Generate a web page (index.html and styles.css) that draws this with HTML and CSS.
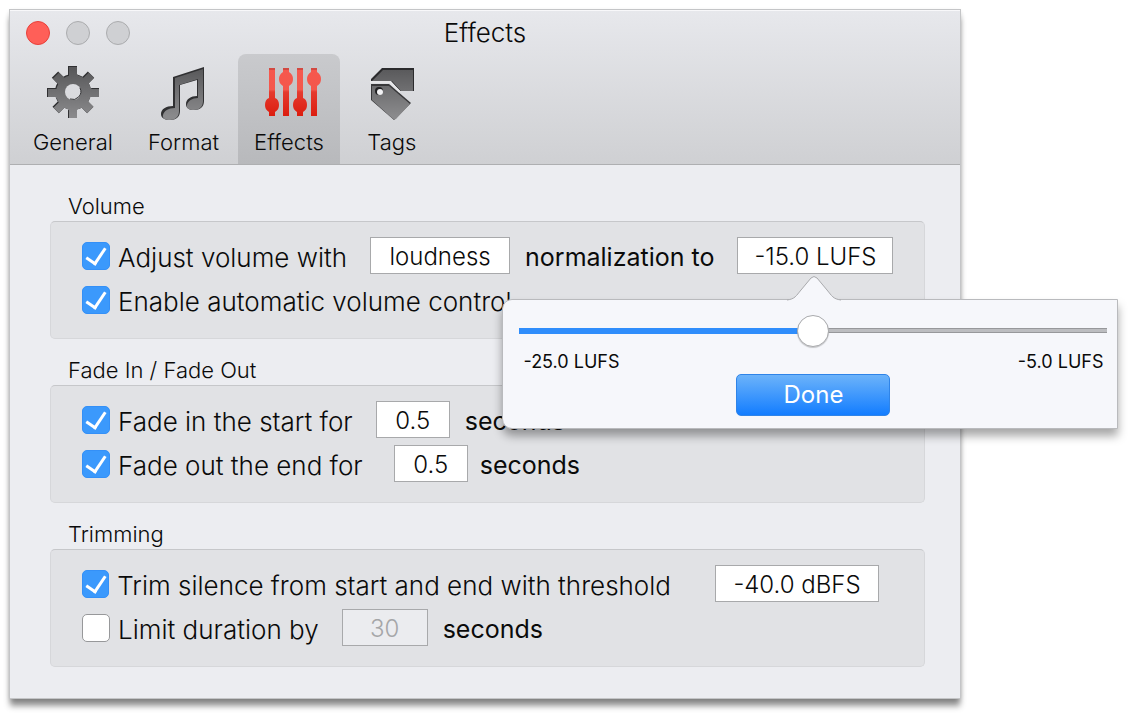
FILE: index.html
```html
<!DOCTYPE html>
<html lang="en">
<head>
    <meta charset="UTF-8">
    <meta name="viewport" content="width=device-width, initial-scale=1.0">
    <title>Effects</title>
    <link rel="stylesheet" href="styles.css">
</head>
<body>
    <main class="window">
        <header class="toolbar">
            <div class="title-bar">
                <div class="lights">
                    <button class="light close" aria-label="Close"></button>
                    <button class="light" aria-label="Minimize" disabled></button>
                    <button class="light" aria-label="Zoom" disabled></button>
                </div>
                <h1>Effects</h1>
            </div>
            <nav class="tabs">
                <button class="tab">
                    <svg class="icon" viewBox="0 0 56 56" aria-hidden="true">
                        <defs>
                            <linearGradient id="metal" gradientUnits="userSpaceOnUse" x1="0" y1="4" x2="0" y2="52">
                                <stop offset="0" stop-color="#58585a"/>
                                <stop offset="1" stop-color="#8a8a8c"/>
                            </linearGradient>
                            <linearGradient id="red" gradientUnits="userSpaceOnUse" x1="0" y1="4" x2="0" y2="52">
                                <stop offset="0" stop-color="#f6584e"/>
                                <stop offset="0.45" stop-color="#f4574c"/>
                                <stop offset="0.5" stop-color="#e53a2e"/>
                                <stop offset="1" stop-color="#dc1d0f"/>
                            </linearGradient>
                            <mask id="gearHole">
                                <rect width="56" height="56" fill="#fff"/>
                                <circle cx="28" cy="28" r="8" fill="#000"/>
                            </mask>
                            <clipPath id="gearClip">
                                <circle cx="28" cy="28" r="18"/>
                                <path d="M23 2h9v52h-9zM2 24h52v9H2z"/>
                                <path d="M24 3h9v50h-9zM3 24h50v9H3z" transform="rotate(45 28 28)"/>
                            </clipPath>
                        </defs>
                        <g mask="url(#gearHole)">
                            <g clip-path="url(#gearClip)">
                                <rect width="56" height="56" fill="#303032"/>
                                <g transform="translate(1 1)">
                                    <rect width="56" height="56" fill="url(#metal)" clip-path="url(#gearClip)"/>
                                </g>
                            </g>
                        </g>
                        <path d="M35 24a8 8 0 0 1-10 11" fill="none" stroke="#333335" stroke-width="1"/>
                    </svg>
                    <span>General</span>
                </button>
                <button class="tab">
                    <svg class="icon" viewBox="0 0 56 56" aria-hidden="true">
                        <path fill="#303032" d="M18 13L49 3v34c0 6-4 9-10 9-5 0-8-2-8-6 0-5 5-8 11-8V16l-17 5v26c0 6-4 9-10 9-5 0-9-2-9-6 0-5 5-8 12-8z"/>
                        <path fill="url(#metal)" d="M20 14L48 5v32c0 6-4 9-9 9s-8-2-7-5c1-4 5-7 11-7V15l-19 6v26c0 6-4 9-9 9s-8-2-7-5c1-4 5-7 12-7z"/>
                    </svg>
                    <span>Format</span>
                </button>
                <button class="tab selected" aria-current="page">
                    <svg class="icon" viewBox="0 0 56 56" aria-hidden="true">
                        <g fill="url(#red)">
                            <path d="M8 4h6v30c3 1 4 4 4 7s-1 5-4 7v4H8v-4c-3-2-4-4-4-7s1-6 4-7z"/>
                            <path d="M22 4h6v4c3 2 4 4 4 7s-1 5-4 7v30h-6V22c-3-2-4-4-4-7s1-5 4-7z"/>
                            <path d="M36 4h6v30c3 1 4 4 4 7s-1 5-4 7v4h-6v-4c-3-2-4-4-4-7s1-6 4-7z"/>
                            <path d="M50 4h6v4c3 2 4 4 4 7s-1 5-4 7v30h-6V22c-3-2-4-4-4-7s1-5 4-7z"/>
                        </g>
                        <path d="M8 5h6M22 5h6M36 5h6M50 5h6" stroke="#b03a34" stroke-width="1"/>
                    </svg>
                    <span>Effects</span>
                </button>
                <button class="tab">
                    <svg class="icon" viewBox="0 0 56 56" aria-hidden="true">
                        <path fill="#2b2b2d" d="M18 4h32v23H36l-9-10H7v-2z"/>
                        <path fill="url(#metal)" d="M19 6h30v21H37l-9-10H8z"/>
                        <path fill="#38383a" d="M7 20h18l22 19-17 17-23-20z"/>
                        <path fill="url(#metal)" d="M8 22h17l21 18-14 15q-2 1-4-1L8 36z"/>
                        <circle cx="15" cy="27" r="4" fill="#202022"/>
                        <circle cx="16" cy="28" r="3" fill="#f2f2f4"/>
                        <path d="M6 18h20l10 10" fill="none" stroke="#e6e6e8" stroke-width="2"/>
                    </svg>
                    <span>Tags</span>
                </button>
            </nav>
        </header>

        <form class="content">
            <section class="group">
                <h2>Volume</h2>
                <div class="box">
                    <div class="row">
                        <input type="checkbox" id="adjust" checked>
                        <label for="adjust">Adjust volume with</label>
                        <select class="field method" aria-label="Normalization method">
                            <option>loudness</option>
                        </select>
                        <label class="unit" for="target">normalization to</label>
                        <div class="anchor">
                            <input type="text" class="field target" id="target" value="-15.0 LUFS">
                            <div class="popover">
                                <svg class="arrow" viewBox="0 0 54 26" aria-hidden="true">
                                    <path d="M0 25C8 24 9 21 14 15L24 3q3-3 6 0l10 12c5 6 6 9 14 10v1H0z" fill="#f6f7fb"/>
                                    <path d="M0 25C8 24 9 21 14 15L24 3q3-3 6 0l10 12c5 6 6 9 14 10" fill="none" stroke="#a9aaad" stroke-width="1"/>
                                </svg>
                                <input type="range" class="slider" min="-25" max="-5" value="-15" aria-label="Target loudness">
                                <div class="limits">
                                    <span>-25.0 LUFS</span>
                                    <span>-5.0 LUFS</span>
                                </div>
                                <button type="button" class="done">Done</button>
                            </div>
                        </div>
                    </div>
                    <div class="row">
                        <input type="checkbox" id="auto" checked>
                        <label for="auto">Enable automatic volume control</label>
                    </div>
                </div>
            </section>

            <section class="group">
                <h2>Fade In / Fade Out</h2>
                <div class="box">
                    <div class="row">
                        <input type="checkbox" id="fadeIn" checked>
                        <label for="fadeIn">Fade in the start for</label>
                        <input type="text" class="field short" id="fadeInTime" value="0.5">
                        <label class="unit" for="fadeInTime">seconds</label>
                    </div>
                    <div class="row">
                        <input type="checkbox" id="fadeOut" checked>
                        <label for="fadeOut">Fade out the end for</label>
                        <input type="text" class="field short wide-gap" id="fadeOutTime" value="0.5">
                        <label class="unit" for="fadeOutTime">seconds</label>
                    </div>
                </div>
            </section>

            <section class="group">
                <h2>Trimming</h2>
                <div class="box">
                    <div class="row">
                        <input type="checkbox" id="trim" checked>
                        <label for="trim">Trim silence from start and end with threshold</label>
                        <input type="text" class="field threshold" aria-label="Silence threshold" value="-40.0 dBFS">
                    </div>
                    <div class="row">
                        <input type="checkbox" id="limit">
                        <label for="limit">Limit duration by</label>
                        <input type="text" class="field duration" id="limitTime" value="30" disabled>
                        <label class="unit" for="limitTime">seconds</label>
                    </div>
                </div>
            </section>
        </form>
    </main>
</body>
</html>
```
FILE: styles.css
```css
:root {
    --text: #0a0a0a;
    --blue: #3b99fc;
    --border: #a8a9ab;
}

* {
    box-sizing: border-box;
}

body {
    margin: 0;
    padding: 10px 168px 20px 10px;
    background: #fff;
    color: var(--text);
    font-family: Inter, "Liberation Sans", sans-serif;
    font-size: 26px;
    font-weight: 300;
}

button,
input,
select {
    font: inherit;
    color: inherit;
    margin: 0;
}

.window {
    background: #ecedf1;
    box-shadow: 0 0 0 1px #c4c5c7, 0 8px 6px rgba(0, 0, 0, 0.42), 0 2px 5px rgba(0, 0, 0, 0.2);
}

.toolbar {
    background: linear-gradient(#e7e8ec, #cfd0d3);
    border-bottom: 1px solid #aeafb1;
    border-top: 1px solid #f8f8fa;
}

.title-bar {
    display: grid;
    grid-template-columns: 1fr auto 1fr;
    align-items: center;
    height: 43px;
    padding: 0 16px;
}

.title-bar h1 {
    margin: 0;
    font-size: 26px;
    font-weight: 300;
}

.lights {
    display: flex;
    gap: 16px;
}

.light {
    width: 24px;
    height: 24px;
    padding: 0;
    border: 1px solid #abacae;
    border-radius: 50%;
    background: #cfd0d3;
}

.light.close {
    border-color: #e8403a;
    background: #ff5f58;
}

.tabs {
    display: flex;
    gap: 3px;
    padding-left: 7px;
}

.tab {
    display: flex;
    flex-direction: column;
    align-items: center;
    gap: 7px;
    min-width: 98px;
    height: 110px;
    padding: 10px 16px 0;
    border: 0;
    border-radius: 8px 8px 0 0;
    background: none;
    font-size: 22px;
    line-height: 30px;
}

.tab.selected {
    background: linear-gradient(#c9cacd, #b8b9bc);
}

.icon {
    width: 56px;
    height: 56px;
    overflow: visible;
}

.content {
    padding: 10px 35px 31px 40px;
}

.group h2 {
    margin: 0;
    padding: 16px 18px 0;
    font-size: 22px;
    font-weight: 300;
    line-height: 30px;
}

.box {
    padding: 13px 30px 15px 31px;
    border: 1px solid #d6d7da;
    border-top-color: #c6c7ca;
    border-radius: 5px;
    background: #e1e2e5;
}

.row {
    display: flex;
    align-items: center;
    height: 44px;
    white-space: nowrap;
}

.unit {
    font-size: 25px;
    font-weight: 400;
}

input[type="checkbox"] {
    appearance: none;
    display: grid;
    place-items: center;
    width: 28px;
    height: 28px;
    margin: 0 8px 2px 0;
    border: 1px solid #97989a;
    border-radius: 5px;
    background: #fff;
}

input[type="checkbox"]:checked {
    border-color: #3490f7;
    background: var(--blue);
}

input[type="checkbox"]:checked::after {
    content: "";
    width: 9px;
    height: 17px;
    margin-bottom: 4px;
    border: solid #fff;
    border-width: 0 3px 3px 0;
    transform: rotate(34deg);
}

.field {
    appearance: none;
    height: 37px;
    margin: 0 15px 4px 23px;
    padding: 3px 0 0;
    border: 1px solid var(--border);
    border-radius: 0;
    background: #fff;
    font-size: 24px;
    text-align: center;
    text-align-last: center;
}

.field:disabled {
    background: #ebecef;
    color: #a5a6a8;
}

.field.wide-gap {
    margin-left: 31px;
    margin-right: 12px;
}

.method {
    width: 140px;
}

.target {
    width: 156px;
    margin-right: 0;
}

.short {
    width: 74px;
}

.threshold {
    width: 164px;
    margin-left: 44px;
}

.duration {
    width: 86px;
}

.anchor {
    position: relative;
    display: flex;
}

.popover {
    position: absolute;
    z-index: 1;
    top: 62px;
    left: -212px;
    display: flex;
    flex-direction: column;
    align-items: center;
    width: 616px;
    height: 130px;
    padding: 15px 10px 13px 16px;
    border: 1px solid #b9babd;
    border-radius: 10px 0 0 10px;
    background: #f6f7fb;
    box-shadow: 0 7px 10px rgba(0, 0, 0, 0.35);
}

.arrow {
    position: absolute;
    top: -25px;
    left: 284px;
    width: 54px;
    height: 26px;
}

.slider {
    appearance: none;
    width: 100%;
    height: 32px;
    background:
        linear-gradient(90deg, #2f8dfb 50%, transparent 50%) center / 100% 6px no-repeat,
        linear-gradient(#97989b 1px, #bcbdc0 1px, #bcbdc0 4px, #97989b 4px) center / 100% 5px no-repeat;
}

.slider::-webkit-slider-thumb {
    appearance: none;
    width: 32px;
    height: 32px;
    border: 1px solid #a9aaad;
    border-radius: 50%;
    background: #fff;
    box-shadow: 0 1px 1px rgba(0, 0, 0, 0.2);
}

.limits {
    display: flex;
    justify-content: space-between;
    align-self: stretch;
    padding: 4px 4px 1px;
    font-size: 18px;
    font-weight: 400;
    line-height: 22px;
}

.done {
    flex-shrink: 0;
    width: 154px;
    height: 42px;
    padding: 0;
    border: 1px solid #2f84e8;
    border-radius: 5px;
    background: linear-gradient(#6cb3fa, #137dff);
    color: #fff;
    font-size: 24px;
    font-weight: 400;
}
```
